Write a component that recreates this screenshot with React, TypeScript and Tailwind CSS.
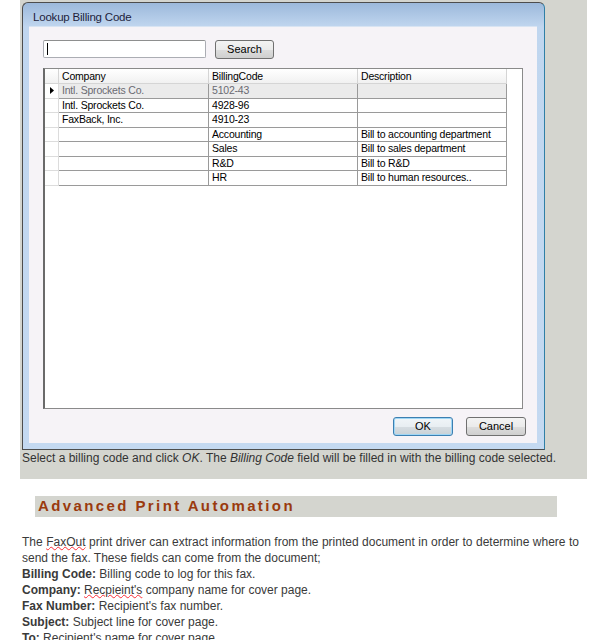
import React from "react";

const rows = [
  { c: "Intl. Sprockets Co.", b: "5102-43", d: "", sel: true },
  { c: "Intl. Sprockets Co.", b: "4928-96", d: "" },
  { c: "FaxBack, Inc.", b: "4910-23", d: "" },
  { c: "", b: "Accounting", d: "Bill to accounting department" },
  { c: "", b: "Sales", d: "Bill to sales department" },
  { c: "", b: "R&D", d: "Bill to R&D" },
  { c: "", b: "HR", d: "Bill to human resources.." },
];

export default function App() {
  return (
    <div className="w-[606px] h-[640px] bg-white overflow-hidden text-[#333] font-['Liberation_Sans',Arial,sans-serif]">
      {/* gray screenshot box */}
      <div className="ml-[20px] w-[567px] h-[479px] bg-[#d4d5cf] pl-[2px] pt-[2px]">
        {/* dialog */}
        <div className="w-[523px] h-[448px] border border-[#4d4d4d] border-r-[#2f7fa6] rounded-t-[6px] bg-[linear-gradient(to_bottom,#9cb9db_0px,#c0d6ef_24px,#c4d9f1_100%)] flex flex-col">
          <div className="h-[23px] pl-[10px] pt-[8px] text-[11.5px] leading-[13px] tracking-[-0.2px] text-[#1e1e3c]">
            Lookup Billing Code
          </div>
          <div className="mx-[6px] w-[508px] h-[417px] bg-[#f6f3f7] border-t border-[#d8e4f2] flex flex-col pl-[14px] pt-[13px]">
            <div className="flex items-start gap-[9px]">
              <div className="w-[163px] h-[18px] bg-white border border-[#abadb3] border-t-[#8e8f8f] rounded-[2px] flex items-center pl-[3px]">
                <div className="w-px h-[12px] bg-black" />
              </div>
              <div className="w-[59px] h-[19px] border border-[#707070] rounded-[3px] bg-[linear-gradient(to_bottom,#f3f3f3_0%,#ebebeb_50%,#dddddd_51%,#cfcfcf_100%)] flex items-center justify-center text-[11px] text-black">
                Search
              </div>
            </div>
            {/* grid */}
            <div className="mt-[9px] w-[480px] h-[341px] bg-white border border-[#8a8a8a] border-l-[2px] border-l-[#6a6a6a] text-[10.5px] leading-[13px] tracking-[-0.2px]">
              <div className="flex h-[15px]">
                <div className="w-[14px] border-r border-b border-[#d5d5d5] bg-[linear-gradient(to_bottom,#ffffff,#f1f1f1)]" />
                <div className="w-[150px] border-r border-b border-[#d5d5d5] pl-[3px] pt-[1px] text-black bg-[linear-gradient(to_bottom,#ffffff,#f1f1f1)]">Company</div>
                <div className="w-[149px] border-r border-b border-[#d5d5d5] pl-[3px] pt-[1px] text-black bg-[linear-gradient(to_bottom,#ffffff,#f1f1f1)]">BillingCode</div>
                <div className="w-[149px] border-r border-b border-[#d5d5d5] pl-[3px] pt-[1px] text-black bg-[linear-gradient(to_bottom,#ffffff,#f1f1f1)]">Description</div>
              </div>
              {rows.map((r, i) => (
                <div key={i} className="flex h-[14.5px]">
                  <div className="w-[14px] border-r border-b border-[#dcdcdc] bg-white flex items-center justify-center">
                    {r.sel && (
                      <svg width="4" height="7" viewBox="0 0 4 7">
                        <path d="M0 0 L4 3.5 L0 7 Z" fill="#000" />
                      </svg>
                    )}
                  </div>
                  {[r.c, r.b, r.d].map((t, j) => (
                    <div
                      key={j}
                      className={`${j === 0 ? "w-[150px]" : "w-[149px]"} border-r border-b border-[#9a9a9a] pl-[3px] whitespace-nowrap overflow-hidden ${
                        r.sel ? "bg-[#ebebeb] text-[#6a6a72]" : "text-black"
                      }`}
                    >
                      {t}
                    </div>
                  ))}
                </div>
              ))}
            </div>
            <div className="mt-[8px] flex justify-end gap-[13px] pr-[11px]">
              <div className="w-[60px] h-[19px] border border-[#3c7fb1] rounded-[3px] shadow-[inset_0_0_0_1px_#9fd6f5] bg-[linear-gradient(to_bottom,#f0f5f8_0%,#e8eef2_50%,#d6dde2_51%,#c9d1d6_100%)] flex items-center justify-center text-[11px] text-black">
                OK
              </div>
              <div className="w-[60px] h-[19px] border border-[#707070] rounded-[3px] bg-[linear-gradient(to_bottom,#f3f3f3_0%,#ebebeb_50%,#dddddd_51%,#cfcfcf_100%)] flex items-center justify-center text-[11px] text-black">
                Cancel
              </div>
            </div>
          </div>
        </div>
        <div className="mt-[1px] text-[12px] leading-[14px] text-[#333] whitespace-nowrap">
          Select a billing code and click <i>OK</i>. The <i>Billing Code</i> field will be filled in with the billing code selected.
        </div>
      </div>

      {/* heading */}
      <div className="mt-[17px] ml-[35px] w-[522px] h-[21px] bg-[#d4d5cf] pl-[3px] flex items-center">
        <span className="text-[15px] font-bold tracking-[2.4px] text-[#9a3a0e]">Advanced Print Automation</span>
      </div>

      <div className="mt-[17px] ml-[22px] w-[557px] text-[12px] leading-[16px] text-[#3a3a3a]">
        <p className="text-justify">
          The <span className="underline decoration-wavy decoration-red-500 decoration-1 underline-offset-[0px]">FaxOut</span> print driver can extract information from the printed document in order to determine where to send the fax. These fields can come from the document;
        </p>
        <p><b>Billing Code:</b> Billing code to log for this fax.</p>
        <p><b>Company:</b> <span className="underline decoration-wavy decoration-red-500 decoration-1 underline-offset-[0px]">Recpieint's</span> company name for cover page.</p>
        <p><b>Fax Number:</b> Recipient's fax number.</p>
        <p><b>Subject:</b> Subject line for cover page.</p>
        <p><b>To:</b> Recipient's name for cover page.</p>
      </div>
    </div>
  );
}
